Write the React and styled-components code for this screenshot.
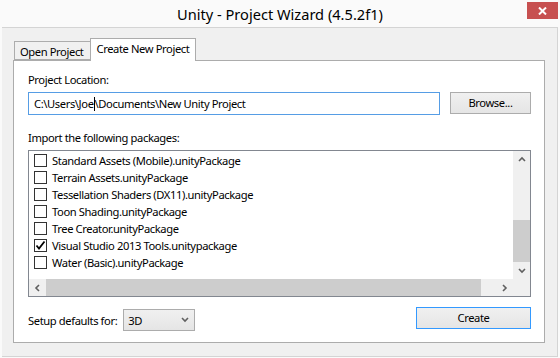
import React from 'react'
import styled, {createGlobalStyle} from 'styled-components'

const GlobalStyle = createGlobalStyle`
    html, body {
        margin: 0;
        padding: 0;
        background: #ffffff;
    }
    body {
        font-family: "Noto Sans", "Open Sans", sans-serif;
        font-size: 11.2px;
        letter-spacing: -0.4px;
        color: #000;
    }
`;

const Window = styled.div`
    width: 560px;
    height: 358px;
    box-sizing: border-box;
    background: #fafafa;
    display: flex;
    flex-direction: column;
`;

const TitleBar = styled.div`
    height: 27px;
    flex: none;
    display: grid;
    grid-template-columns: 1fr auto 1fr;
    align-items: start;
`;

const Title = styled.div`
    grid-column: 2;
    font-size: 14.6px;
    letter-spacing: 0;
    line-height: 20px;
    padding-top: 4px;
    color: #000;
`;

const CloseButton = styled.div`
    grid-column: 3;
    justify-self: end;
    width: 31px;
    height: 17px;
    margin: 2px 2px 0 0;
    background: #c75050;
    display: flex;
    align-items: center;
    justify-content: center;
`;

const Body = styled.div`
    flex: 1;
    margin: 0 2px 1px 2px;
    background: #f0f0f0;
    border-top: 1px solid #d4d4d4;
    border-right: 1px solid #d4d4d4;
    border-bottom: 1px solid #d4d4d4;
    padding: 10px 12px 13px 11px;
    display: flex;
    flex-direction: column;
`;

const TabStrip = styled.div`
    display: flex;
    align-items: flex-end;
    height: 22px;
    padding-left: 1px;
    position: relative;
    z-index: 1;
`;

const Tab = styled.div`
    box-sizing: border-box;
    height: ${p => p.active ? '23px' : '19px'};
    margin-bottom: ${p => p.active ? '-1px' : '0'};
    padding: ${p => p.active ? '2px 6px 0 6px' : '2px 6px 0 5px'};
    background: ${p => p.active ? '#ffffff' : '#f0f0f0'};
    border: 1px solid #acacac;
    border-bottom: ${p => p.active ? 'none' : '1px solid #acacac'};
    margin-left: ${p => p.active ? '-1px' : '0'};
    line-height: 16px;
    white-space: nowrap;
`;

const Panel = styled.div`
    flex: 1;
    background: #ffffff;
    border: 1px solid #acacac;
    padding: 11px 13px 0 14px;
    display: flex;
    flex-direction: column;
`;

const Label = styled.div`
    line-height: 16px;
    margin-top: ${p => p.gap || 0}px;
`;

const LocationRow = styled.div`
    display: flex;
    align-items: flex-start;
    gap: 10px;
    margin-top: 4px;
`;

const PathInput = styled.div`
    flex: 1;
    height: 23px;
    box-sizing: border-box;
    border: 1px solid #569de5;
    padding: 0 5px;
    line-height: 21px;
    white-space: nowrap;
`;

const Caret = styled.span`
    display: inline-block;
    width: 1px;
    height: 14px;
    background: #000;
    vertical-align: -3px;
`;

const Button = styled.div`
    width: ${p => p.width}px;
    height: 22px;
    box-sizing: border-box;
    border: 1px solid ${p => p.focused ? '#3399ff' : '#acacac'};
    background: linear-gradient(#f0f0f0, #e5e5e5);
    display: flex;
    align-items: center;
    justify-content: center;
    line-height: 16px;
`;

const ListBox = styled.div`
    margin-top: 4px;
    height: 147px;
    box-sizing: border-box;
    border: 1px solid #828790;
    display: grid;
    grid-template-columns: 1fr 17px;
    grid-template-rows: 1fr 17px;
    overflow: hidden;
`;

const ListView = styled.div`
    padding: 1px 0 0 5px;
    overflow: hidden;
`;

const Row = styled.div`
    height: 17px;
    line-height: 17px;
    display: flex;
    align-items: center;
    gap: 5px;
    white-space: nowrap;
`;

const CheckBox = styled.div`
    width: 13px;
    height: 13px;
    box-sizing: border-box;
    border: 1px solid #333333;
    background: #ffffff;
    display: flex;
    align-items: center;
    justify-content: center;
    flex: none;
`;

const VScroll = styled.div`
    background: #f0f0f0;
    display: grid;
    grid-template-rows: 17px 1fr 17px;
`;

const HScroll = styled.div`
    background: #f0f0f0;
    display: grid;
    grid-template-columns: 17px 1fr 17px;
`;

const ScrollArrow = styled.div`
    display: flex;
    align-items: center;
    justify-content: center;
`;

const VTrack = styled.div`
    display: flex;
    flex-direction: column;
    justify-content: flex-end;
`;

const HTrack = styled.div`
    display: flex;
    padding-right: 15px;
`;

const Thumb = styled.div`
    background: #cdcdcd;
    flex: ${p => p.grow ? 1 : 'none'};
    height: ${p => p.size ? p.size + 'px' : 'auto'};
`;

const Corner = styled.div`
    background: #f0f0f0;
`;

const BottomRow = styled.div`
    display: flex;
    justify-content: space-between;
    align-items: flex-start;
    margin-top: 10px;
`;

const SetupGroup = styled.div`
    display: flex;
    align-items: center;
    gap: 6px;
    margin-top: 2px;
`;

const Select = styled.div`
    width: 72px;
    height: 22px;
    box-sizing: border-box;
    border: 1px solid #acacac;
    background: linear-gradient(#f0f0f0, #e5e5e5);
    display: flex;
    align-items: center;
    justify-content: space-between;
    padding: 0 5px 0 4px;
`;

const Chevron = ({dir}) => {
    const paths = {
        up: 'M1 5 L4 2 L7 5',
        down: 'M1 2 L4 5 L7 2',
        left: 'M5 1 L2 4 L5 7',
        right: 'M2 1 L5 4 L2 7',
    };
    return (
        <svg width="8" height="8" viewBox="0 0 8 8">
            <path d={paths[dir]} fill="none" stroke="#606060" strokeWidth="1.6"/>
        </svg>
    );
};

const CheckMark = () => (
    <svg width="11" height="11" viewBox="0 0 11 11">
        <path d="M1.5 5.5 L4 8.5 L9.5 1.5" fill="none" stroke="#000" strokeWidth="1.8"/>
    </svg>
);

const packages = [
    {name: 'Standard Assets (Mobile).unityPackage'},
    {name: 'Terrain Assets.unityPackage'},
    {name: 'Tessellation Shaders (DX11).unityPackage'},
    {name: 'Toon Shading.unityPackage'},
    {name: 'Tree Creator.unityPackage'},
    {name: 'Visual Studio 2013 Tools.unitypackage', checked: true},
    {name: 'Water (Basic).unityPackage'},
];

export default function App() {
    return (
        <Window>
            <GlobalStyle/>
            <TitleBar>
                <Title>Unity - Project Wizard (4.5.2f1)</Title>
                <CloseButton>
                    <svg width="9" height="8" viewBox="0 0 9 8">
                        <path d="M1 0.5 L8 7.5 M8 0.5 L1 7.5" stroke="#fff" strokeWidth="2"/>
                    </svg>
                </CloseButton>
            </TitleBar>
            <Body>
                <TabStrip>
                    <Tab>Open Project</Tab>
                    <Tab active>Create New Project</Tab>
                </TabStrip>
                <Panel>
                    <Label>Project Location:</Label>
                    <LocationRow>
                        <PathInput>C:\Users\Joe<Caret/>\Documents\New Unity Project</PathInput>
                        <Button width={81}>Browse...</Button>
                    </LocationRow>
                    <Label gap={15}>Import the following packages:</Label>
                    <ListBox>
                        <ListView>
                            {packages.map(p => (
                                <Row key={p.name}>
                                    <CheckBox>{p.checked && <CheckMark/>}</CheckBox>
                                    {p.name}
                                </Row>
                            ))}
                        </ListView>
                        <VScroll>
                            <ScrollArrow><Chevron dir="up"/></ScrollArrow>
                            <VTrack><Thumb size={42}/></VTrack>
                            <ScrollArrow><Chevron dir="down"/></ScrollArrow>
                        </VScroll>
                        <HScroll>
                            <ScrollArrow><Chevron dir="left"/></ScrollArrow>
                            <HTrack><Thumb grow/></HTrack>
                            <ScrollArrow><Chevron dir="right"/></ScrollArrow>
                        </HScroll>
                        <Corner/>
                    </ListBox>
                    <BottomRow>
                        <SetupGroup>
                            Setup defaults for:
                            <Select>
                                3D
                                <Chevron dir="down"/>
                            </Select>
                        </SetupGroup>
                        <Button width={115} focused>Create</Button>
                    </BottomRow>
                </Panel>
            </Body>
        </Window>
    )
}
